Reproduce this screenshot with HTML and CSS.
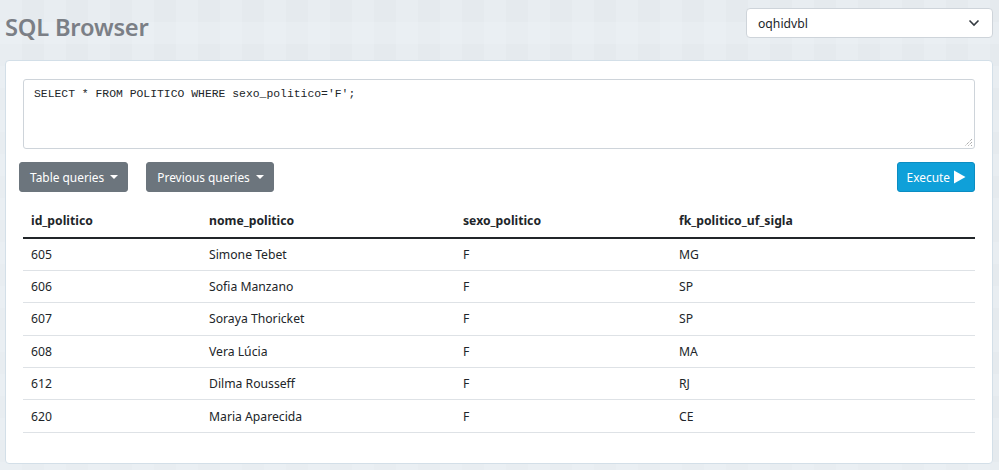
FILE: index.html
```html
<!DOCTYPE html>
<html lang="pt">
<head>
<meta charset="utf-8">
<title>SQL Browser</title>
<link rel="stylesheet" href="styles.css">
</head>
<body>
<header class="topbar">
  <h1 class="title">SQL Browser</h1>
  <div class="db-select">
    <span>oqhidvbl</span>
    <svg class="chev" width="12" height="8" viewBox="0 0 12 8"><path d="M1.5 1.5 L6 6 L10.5 1.5" fill="none" stroke="#343a40" stroke-width="1.6"/></svg>
  </div>
</header>
<main class="card">
  <div class="editor">SELECT * FROM POLITICO WHERE sexo_politico='F';<svg class="grip" width="10" height="10" viewBox="0 0 10 10"><path d="M9 2 L2 9 M9 5 L5 9 M9 8 L8 9" stroke="#888" stroke-width="1" stroke-dasharray="1 1"/></svg></div>
  <div class="actions">
    <button class="btn btn-gray">Table queries <span class="caret"></span></button>
    <button class="btn btn-gray">Previous queries <span class="caret"></span></button>
    <span class="spacer"></span>
    <button class="btn btn-exec">Execute <svg width="13" height="14" viewBox="0 0 13 14"><path d="M1 0.5 L12.5 7 L1 13.5 Z" fill="#fff"/></svg></button>
  </div>
  <table class="results">
    <thead>
      <tr><th class="c1">id_politico</th><th class="c2">nome_politico</th><th class="c3">sexo_politico</th><th class="c4">fk_politico_uf_sigla</th></tr>
    </thead>
    <tbody>
      <tr><td>605</td><td>Simone Tebet</td><td>F</td><td>MG</td></tr>
      <tr><td>606</td><td>Sofia Manzano</td><td>F</td><td>SP</td></tr>
      <tr><td>607</td><td>Soraya Thoricket</td><td>F</td><td>SP</td></tr>
      <tr><td>608</td><td>Vera Lúcia</td><td>F</td><td>MA</td></tr>
      <tr><td>612</td><td>Dilma Rousseff</td><td>F</td><td>RJ</td></tr>
      <tr><td>620</td><td>Maria Aparecida</td><td>F</td><td>CE</td></tr>
    </tbody>
  </table>
</main>
</body>
</html>
```
FILE: styles.css
```css
* { box-sizing: border-box; }
html, body { margin: 0; height: 100%; }
body {
  font-family: "Noto Sans", "Open Sans", sans-serif;
  color: #212529;
  background-color: #e8edf1;
  background-image:
    conic-gradient(#e5eaee 25%, transparent 0 50%, #eaeff3 0 75%, transparent 0);
  background-size: 44px 44px;
  padding: 0 6px 0 5px;
}
.topbar {
  height: 60px;
  display: flex;
  align-items: flex-start;
  justify-content: space-between;
}
.title {
  margin: 11px 0 0 0;
  font-size: 23.7px;
  font-weight: 600;
  color: #7b7f86;
  line-height: 32px;
  letter-spacing: -0.2px;
}
.db-select {
  margin-top: 8px;
  width: 247px;
  height: 30px;
  background: #fff;
  border: 1px solid #ced4da;
  border-radius: 4px;
  display: flex;
  align-items: center;
  justify-content: space-between;
  padding: 0 12px 0 11px;
  font-size: 12.2px;
  color: #212529;
}
.card {
  background: #fff;
  border: 1px solid #d3dfe8;
  border-radius: 4px;
  padding: 18px 17px 30px 17px;
  height: 404px;
}
.editor {
  position: relative;
  height: 70px;
  border: 1px solid #ced4da;
  border-radius: 3px;
  padding: 8px 10px;
  font-family: "Liberation Mono", monospace;
  font-size: 11.4px;
  line-height: 13px;
  color: #212529;
}
.grip { position: absolute; right: 1px; bottom: 1px; }
.actions {
  display: flex;
  align-items: center;
  gap: 18px;
  margin: 13px 0 12px -4px;
  height: 30px;
}
.spacer { flex: 1; }
.btn {
  height: 30px;
  border: 1px solid transparent;
  border-radius: 3px;
  font-family: inherit;
  font-size: 11.9px;
  color: #fff;
  padding: 0 9px 0 10px;
  display: inline-flex;
  align-items: center;
  gap: 5px;
}
.btn-gray { background: #6c757d; border-color: #6c757d; }
.btn-exec { background: #0fa0d9; border-color: #0b8dc2; gap: 3px; padding: 0 8px 0 9px; }
.caret {
  width: 0; height: 0;
  border-left: 4px solid transparent;
  border-right: 4px solid transparent;
  border-top: 4px solid #fff;
  margin-left: 1px;
}
.results {
  width: 100%;
  border-collapse: collapse;
  font-size: 12.2px;
}
.results th.c1 { width: 178px; }
.results th.c2 { width: 254px; }
.results th.c3 { width: 216px; }
.results th.c4 { width: auto; }
.results th {
  text-align: left;
  font-weight: 700;
  height: 34px;
  padding: 0 8px;
  border-bottom: 2px solid #212529;
}
.results td {
  height: 32.4px;
  padding: 0 8px;
  border-bottom: 1px solid #dee2e6;
}
```
